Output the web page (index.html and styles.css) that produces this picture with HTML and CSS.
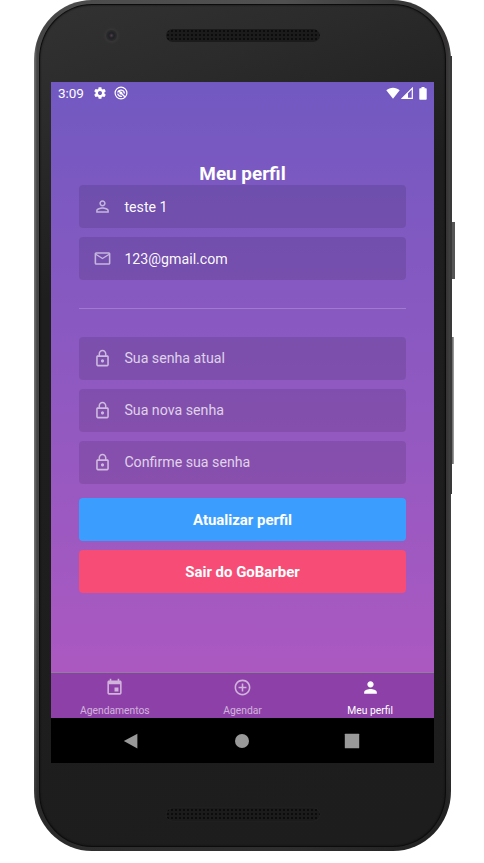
FILE: index.html
```html
<!DOCTYPE html>
<html lang="pt-BR">
<head>
<meta charset="utf-8">
<title>Meu perfil</title>
<link rel="stylesheet" href="styles.css">
</head>
<body>
<svg class="defs" aria-hidden="true">
  <symbol id="lock" viewBox="0 0 24 24"><path d="M12 17c1.100 0 2-.9 2-2s-.9-2-2-2-2 .9-2 2 .9 2 2 2zm6-9h-1V6c0-2.760-2.240-5-5-5S7 3.240 7 6v2H6c-1.100 0-2 .9-2 2v10c0 1.100.9 2 2 2h12c1.100 0 2-.9 2-2V10c0-1.100-.9-2-2-2zM8.900 6c0-1.710 1.390-3.100 3.100-3.100s3.100 1.390 3.100 3.100v2H8.900V6zM18 20H6V10h12v10z"/></symbol>
</svg>
<div class="phone">
  <span class="side power"></span>
  <span class="side volume"></span>
  <span class="side edge"></span>
  <div class="bezel">
    <div class="top">
      <span class="camera"></span>
      <span class="speaker"></span>
    </div>
    <div class="screen">
      <div class="app">
        <div class="status">
          <span class="time">3:09</span>
          <svg class="gear" viewBox="0 0 24 24"><path d="M19.430 12.980c.04-.32.07-.64.07-.98s-.03-.66-.07-.98l2.110-1.650c.19-.15.24-.42.12-.64l-2-3.460c-.12-.22-.39-.3-.61-.22l-2.490 1c-.52-.4-1.080-.73-1.690-.98l-.38-2.650C14.460 2.180 14.250 2 14 2h-4c-.25 0-.46.18-.49.42l-.38 2.650c-.61.25-1.170.59-1.690.98l-2.490-1c-.23-.09-.49 0-.61.22l-2 3.460c-.13.22-.07.49.12.64l2.110 1.650c-.04.32-.07.65-.07.98s.03.66.07.98l-2.110 1.650c-.19.15-.24.42-.12.64l2 3.460c.12.22.39.3.61.22l2.490-1c.52.4 1.080.73 1.690.98l.38 2.650c.03.24.24.42.49.42h4c.25 0 .46-.18.49-.42l.38-2.650c.61-.25 1.170-.59 1.690-.98l2.490 1c.23.09.49 0 .61-.22l2-3.460c.12-.22.07-.49-.12-.64l-2.110-1.650zM12 15.500c-1.930 0-3.500-1.570-3.500-3.500s1.570-3.500 3.500-3.500 3.500 1.570 3.500 3.500-1.570 3.500-3.500 3.500z"/></svg>
          <svg class="debug" viewBox="0 0 14 14"><circle cx="7" cy="7" r="5.900" fill="none" stroke="#fff" stroke-width="1.200"/><path d="M3.600 6.500A3.500 3.500 0 0 1 10.400 7.500M3.700 7.600A3.500 3.500 0 0 0 8 10.300M5 5l5.800 5.800" fill="none" stroke="#fff" stroke-width="1.300"/><circle cx="6.900" cy="6.900" r="1.500"/></svg>
          <span class="spacer"></span>
          <svg class="wifi" viewBox="0 0 14 12"><path d="M.3 3.200C4-.2 10-.2 13.700 3.200L7 11.700z"/></svg>
          <svg class="signal" viewBox="0 0 12 12"><path d="M11.300 1.200v10.100H1.200z" fill="none" stroke="#fff" stroke-width="1.200"/><path d="M1 11.500L7 5.500v6z"/></svg>
          <svg class="battery" viewBox="0 0 8 13"><path d="M2.500 0h3v1.300H7q.7 0 .7.700v10q0 .8-.7.800H1q-.7 0-.7-.8V2q0-.7.700-.7h1.500z"/></svg>
        </div>
        <main class="content">
          <h1>Meu perfil</h1>
          <div class="group">
            <div class="field filled"><svg viewBox="0 0 24 24"><path d="M12 5.900a2.100 2.100 0 1 1 0 4.200 2.100 2.100 0 0 1 0-4.200m0 9c2.970 0 6.100 1.460 6.100 2.100v1.100H5.900V17c0-.64 3.130-2.100 6.100-2.100M12 4C9.790 4 8 5.790 8 8s1.790 4 4 4 4-1.790 4-4-1.790-4-4-4zm0 9c-2.670 0-8 1.340-8 4v3h16v-3c0-2.660-5.330-4-8-4z"/></svg><span>teste 1</span></div>
            <div class="field filled"><svg viewBox="0 0 24 24"><path d="M20 4H4c-1.100 0-2 .9-2 2v12c0 1.100.9 2 2 2h16c1.100 0 2-.9 2-2V6c0-1.100-.9-2-2-2zm0 14H4V8l8 5 8-5v10zm-8-7L4 6h16l-8 5z"/></svg><span>123@gmail.com</span></div>
          </div>
          <hr>
          <div class="group">
            <div class="field"><svg><use href="#lock"/></svg><span>Sua senha atual</span></div>
            <div class="field"><svg><use href="#lock"/></svg><span>Sua nova senha</span></div>
            <div class="field"><svg><use href="#lock"/></svg><span>Confirme sua senha</span></div>
          </div>
          <div class="group actions">
            <button class="update">Atualizar perfil</button>
            <button class="logout">Sair do GoBarber</button>
          </div>
        </main>
        <nav class="tabs">
          <div class="tab"><svg viewBox="0 0 24 24"><path d="M17 12h-5v5h5v-5zM16 1v2H8V1H6v2H5c-1.110 0-1.990.9-1.990 2L3 19c0 1.100.89 2 2 2h14c1.100 0 2-.9 2-2V5c0-1.100-.9-2-2-2h-1V1h-2zm3 18H5V8h14v11z"/></svg><span>Agendamentos</span></div>
          <div class="tab"><svg viewBox="0 0 24 24"><path d="M13 7h-2v4H7v2h4v4h2v-4h4v-2h-4V7zm-1-5C6.480 2 2 6.480 2 12s4.480 10 10 10 10-4.480 10-10S17.520 2 12 2zm0 18c-4.410 0-8-3.590-8-8s3.590-8 8-8 8 3.590 8 8-3.590 8-8 8z"/></svg><span>Agendar</span></div>
          <div class="tab active"><svg viewBox="0 0 24 24"><path d="M12 12c2.210 0 4-1.790 4-4s-1.790-4-4-4-4 1.790-4 4 1.790 4 4 4zm0 2c-2.670 0-8 1.340-8 4v2h16v-2c0-2.660-5.330-4-8-4z"/></svg><span>Meu perfil</span></div>
        </nav>
      </div>
      <div class="system">
        <svg viewBox="0 0 16 16"><path d="M.8 8L14.400.7v14.800z"/></svg>
        <svg viewBox="0 0 16 16"><circle cx="8" cy="8" r="7"/></svg>
        <svg viewBox="0 0 16 16"><rect x=".8" y=".8" width="14.400" height="14.400" rx=".5"/></svg>
      </div>
    </div>
    <div class="bottom"><span class="speaker"></span></div>
  </div>
</div>
</body>
</html>
```
FILE: styles.css
```css
* { box-sizing: border-box; }
body {
  margin: 0;
  height: 863px;
  overflow: hidden;
  background: #fff;
  font-family: Roboto, "Liberation Sans", sans-serif;
  color: #fff;
}
svg { display: block; flex: none; fill: currentColor; }
.defs { display: none; }

/* Device shell */
.phone {
  position: relative;
  width: 417px;
  height: 851px;
  margin-left: 34px;
  padding: 4px 5px;
  border-radius: 58px / 60px;
  background:
    linear-gradient(transparent 70%, rgba(24, 24, 24, .6) 95%),
    linear-gradient(90deg, #777 0, #444 3px, #4c4c4c 40px, #505050 250px, #383838 370px, #343233 412px, #404040 416px);
}
.bezel {
  height: 843px;
  padding: 0 11px;
  border: 1px solid #0c0c0c;
  border-radius: 53px / 55px;
  background: linear-gradient(160deg, #323232 0, #2b2b2b 12%, #1e1e1e 30%, #1d1d1d 100%);
  box-shadow: inset 0 0 2px #0c0c0c;
}
.side { position: absolute; background: #555; }
.power { left: 417px; top: 222px; width: 4px; height: 57px; }
.volume { left: 417px; top: 337px; width: 3px; height: 127px; background: linear-gradient(90deg, #393939, #aaa); }
.edge { left: 416px; top: 56px; width: 2px; height: 438px; background: #393939; }
.top { position: relative; height: 77px; padding-top: 24px; }
.camera {
  position: absolute;
  left: 52px;
  top: 22px;
  width: 17px;
  height: 17px;
  border-radius: 50%;
  background: radial-gradient(circle, #51404b 0, #1f2026 2.500px, #2b2b2b 5px, #353535 6px, #303030 8px);
}
.speaker {
  display: block;
  width: 154px;
  height: 13px;
  margin: 0 auto;
  border-radius: 7px;
  background: radial-gradient(circle, #0c0c0c 0 .8px, transparent 1.300px) 0 0 / 4px 4px, #1b1b1b;
  box-shadow: 0 0 1px #333;
}
.bottom { padding-top: 45px; }

.screen { width: 383px; height: 681px; background: #000; }
.app {
  display: flex;
  flex-direction: column;
  height: 636px;
  background: linear-gradient(#7159c1, #ab59c1 590px);
}
.status { display: flex; align-items: center; height: 22px; padding: 0 7px; }
.time { width: 35px; font-size: 13.500px; letter-spacing: -.1px; }
.gear { width: 14px; height: 14px; }
.debug { width: 14px; height: 14px; margin-left: 7px; }
.spacer { flex: 1; }
.wifi { width: 14px; height: 12px; }
.signal { width: 12px; height: 12px; margin: 0 6px 0 1px; }
.battery { width: 8px; height: 13px; }

.content { flex: 1; padding: 58.200px 28px 0; }
h1 { margin: 0; height: 23px; text-align: center; font-size: 18.900px; line-height: 23px; font-weight: 700; }
.group { display: flex; flex-direction: column; gap: 9.400px; }
.field {
  display: flex;
  align-items: center;
  gap: 12.600px;
  height: 42.700px;
  padding-left: 13.800px;
  border-radius: 4px;
  background: rgba(0, 0, 0, .1);
  color: rgba(255, 255, 255, .75);
  font-size: 14.200px;
}
.field svg { width: 19px; height: 19px; opacity: .82; }
.filled { color: rgba(255, 255, 255, .98); }
.filled svg { opacity: .6; }
hr { height: 1px; margin: 28px 0; border: 0; background: rgba(255, 255, 255, .2); }
.actions { margin-top: 14px; gap: 9px; }
button {
  height: 43px;
  padding: 2px 0 0;
  border: 0;
  border-radius: 4px;
  background: #3b9eff;
  color: #fff;
  font: 700 14.950px Roboto, sans-serif;
}
.logout { background: #f64c75; }

.tabs {
  display: flex;
  height: 46px;
  border-top: 1px solid #8f7e99;
  background: #8d41a8;
}
.tab {
  flex: 1;
  display: flex;
  flex-direction: column;
  align-items: center;
  padding-top: 5px;
  color: rgba(255, 255, 255, .6);
  font-size: 10.300px;
  line-height: 13px;
}
.tab svg { width: 19px; height: 19px; margin-bottom: 7px; }
.tab.active { color: #fff; }
.system {
  display: flex;
  justify-content: space-between;
  align-items: center;
  height: 45px;
  padding: 0 74px 0 72px;
  color: #999;
}
.system svg { width: 16px; height: 16px; }
```
